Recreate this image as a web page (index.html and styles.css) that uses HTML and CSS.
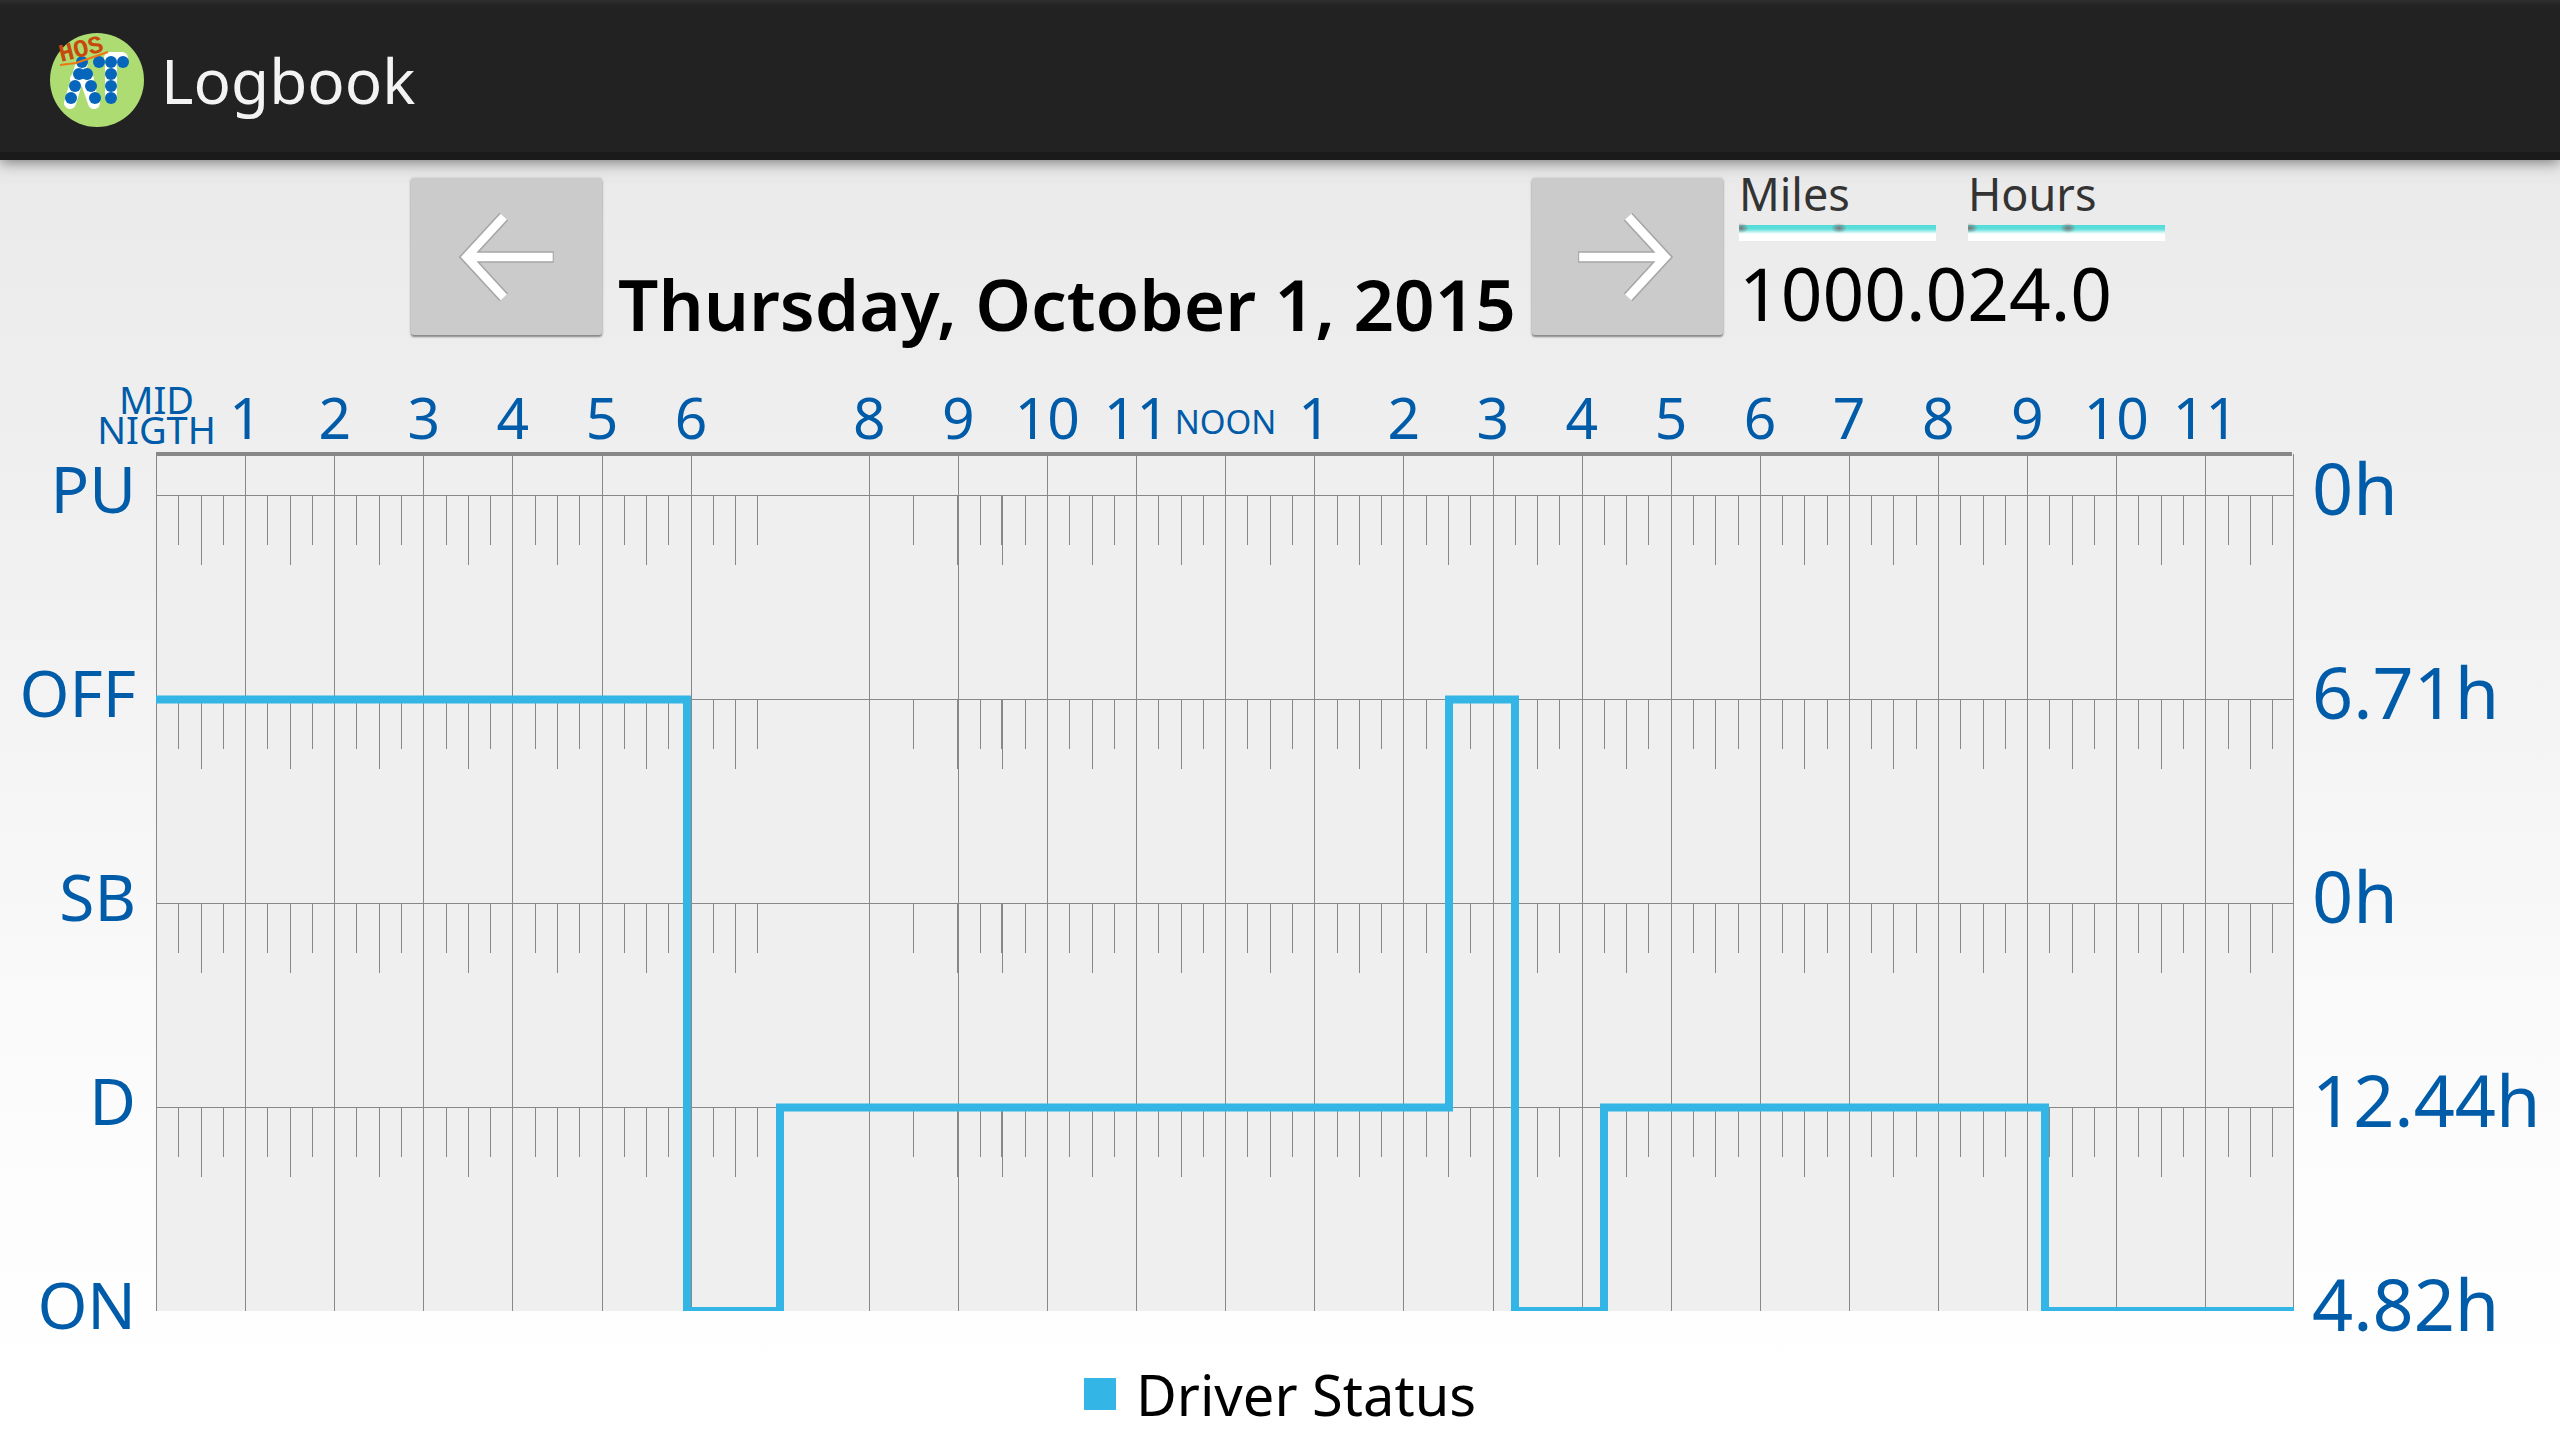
FILE: index.html
```
<!DOCTYPE html>
<html lang="en">
<head>
  <meta charset="UTF-8" />
  <meta name="viewport" content="width=device-width, initial-scale=1" />
  <title>Logbook</title>
  <link rel="stylesheet" href="styles.css">
</head>
<body>
  <header class="action-bar">
    <svg class="logo" viewBox="0 0 94 94" aria-hidden="true">
      <circle cx="47" cy="47" r="47" fill="#addc72" />
      <g fill="none" stroke="#fff" stroke-width="12" stroke-linecap="round">
        <path d="M32 30L20 70M34 41L44 70M60 25H72M61 27V64M26 46H38" />
      </g>
      <g fill="#0666bb">
        <circle cx="32" cy="29" r="6" /><circle cx="29" cy="41" r="6" /><circle cx="37" cy="41" r="6" />
        <circle cx="25" cy="53" r="6" /><circle cx="41" cy="53" r="6" />
        <circle cx="21" cy="65" r="6" /><circle cx="45" cy="65" r="6" />
        <circle cx="49" cy="29" r="6" /><circle cx="61" cy="29" r="6" /><circle cx="73" cy="29" r="6" />
        <circle cx="61" cy="41" r="6" /><circle cx="61" cy="53" r="6" /><circle cx="61" cy="65" r="6" />
      </g>
      <text class="logo-text" x="11" y="29" transform="rotate(-14 11 29)">HOS</text>
      <path d="M10 32L26 30L58 19" fill="none" stroke="#ee7711" stroke-width="2" />
    </svg>
    <h1>Logbook</h1>
  </header>

  <section class="toolbar">
    <button type="button" class="nav-btn" aria-label="Previous day">
      <svg viewBox="0 0 96 92" aria-hidden="true">
        <path class="arrow-edge" d="M92 46H8M45 8L10 46L45 84" />
        <path class="arrow" d="M91 46H10M45 8L10 46L45 84" />
      </svg>
    </button>
    <h2>Thursday, October 1, 2015</h2>
    <button type="button" class="nav-btn" aria-label="Next day">
      <svg viewBox="0 0 96 92" aria-hidden="true">
        <path class="arrow-edge" d="M2 46H86M49 8L84 46L49 84" />
        <path class="arrow" d="M3 46H84M49 8L84 46L49 84" />
      </svg>
    </button>
    <div class="totals">
      <div class="total-heads">
        <span>Miles</span>
        <span>Hours</span>
      </div>
      <div class="total-values"><span>1000.0</span><span>24.0</span></div>
    </div>
  </section>

  <main class="chart">
    <div class="hours" id="hours"></div>
    <div class="labels status">
      <span>PU</span><span>OFF</span><span>SB</span><span>D</span><span>ON</span>
    </div>
    <svg class="plot" id="plot" viewBox="0 0 2138 859" preserveAspectRatio="none"></svg>
    <div class="labels sums">
      <span>0h</span><span>6.71h</span><span>0h</span><span>12.44h</span><span>4.82h</span>
    </div>
  </main>

  <footer class="legend"><span class="swatch"></span>Driver Status</footer>

  <script>
    const HOUR = 89.1;
    const rows = { PU: 43.5, OFF: 247.5, SB: 451.5, D: 655.5, ON: 859 };

    // hour captions, 7 am has none
    const captions = ['MID<br>NIGTH', 1, 2, 3, 4, 5, 6, '', 8, 9, 10, 11, 'NOON', 1, 2, 3, 4, 5, 6, 7, 8, 9, 10, 11];
    document.getElementById('hours').innerHTML = captions.map((c, i) => {
      const cls = i === 0 ? ' class="midnight"' : i === 12 ? ' class="noon"' : '';
      return `<span${cls}>${c}</span>`;
    }).join('');

    let grid = '';
    for (let h = 0; h < 24; h++) {
      if (h === 7) continue;
      const x = Math.round(h * HOUR) + 0.5;
      grid += `M${x} 0V859`;
    }
    grid += 'M2137.5 2V859';

    for (const name of ['PU', 'OFF', 'SB', 'D']) {
      const y = rows[name];
      grid += `M0 ${y}H2138`;
      const tick = (h, len) => {
        grid += `M${Math.round(h * HOUR) + 0.5} ${y}v${len}`;
      };
      for (let h = 0; h < 24; h++) {
        if (h === 7) continue;
        if (h === 8) {
          tick(8.5, 49);
          tick(8.99, 69);
          continue;
        }
        tick(h + 0.25, 49);
        tick(h + 0.5, 69);
        tick(h + 0.75, 49);
        if (h === 9) tick(9.485, 49);
      }
    }

    // [x, row] for every change of status
    const log = [[0, 'OFF'], [531, 'ON'], [624, 'D'], [1293, 'OFF'], [1359, 'ON'], [1448, 'D'], [1889, 'ON']];
    let line = `M0 ${rows.OFF}`;
    log.slice(1).forEach(([x, row]) => { line += `H${x}V${rows[row]}`; });
    line += 'H2138';

    document.getElementById('plot').innerHTML =
      `<path class="grid" d="${grid}" />` +
      `<path class="top" d="M0 2H2136" />` +
      `<path class="line" d="${line}" />`;
  </script>
</body>
</html>
```
FILE: styles.css
```
* {
  box-sizing: border-box;
}
body {
  margin: 0;
  min-height: 100vh;
  font-family: "Noto Sans", "Open Sans", sans-serif;
  color: #000;
  background: linear-gradient(#e8e8e8 160px, #ebebeb 200px, #eee 400px, #f3f3f3 680px, #fafafa 1020px, #fefefe 1300px, #fff);
}
h1, h2 {
  margin: 0;
}
.action-bar {
  display: flex;
  align-items: center;
  gap: 17px;
  height: 160px;
  padding-left: 50px;
  background: linear-gradient(#2e2e2e, #222 6px);
  border-bottom: 8px solid #1a1a1a;
  box-shadow: 0 2px 14px rgba(0, 0, 0, 0.5);
}
.logo {
  width: 94px;
  height: 94px;
  margin-top: 8px;
  overflow: visible;
}
.logo-text {
  font: bold 25px "Liberation Mono", monospace;
  fill: #c8480c;
}
h1 {
  padding-top: 8px;
  font-size: 62px;
  font-weight: 400;
  color: #f3f3f3;
}
.toolbar {
  display: flex;
  justify-content: center;
  gap: 16px;
  height: 212px;
  padding: 18px 0 0 16px;
}
.nav-btn {
  display: flex;
  align-items: center;
  justify-content: center;
  width: 191px;
  height: 157px;
  padding: 0;
  background: #cbcbcb;
  border: 0;
  border-radius: 3px;
  box-shadow: 0 2px 2px #888, 0 0 3px #bbb;
}
.nav-btn svg {
  width: 102px;
  height: 98px;
}
.arrow, .arrow-edge {
  fill: none;
  stroke: #fff;
  stroke-width: 8;
}
.arrow-edge {
  stroke: #a6a6a6;
  stroke-width: 11;
}
h2 {
  padding-top: 74px;
  font-size: 71px;
  font-weight: 600;
  line-height: 104px;
  white-space: nowrap;
}
.total-heads {
  display: flex;
  gap: 32px;
}
.total-heads span {
  width: 197px;
  height: 63px;
  font-size: 45px;
  line-height: 32px;
  color: #333;
  background:
    radial-gradient(8px 5px at 2px 50px, #777, transparent),
    radial-gradient(8px 5px at 100px 50px, #777, transparent),
    linear-gradient(#4fdcd8, #5fdfdb 4px, #fff) 0 47px / 100% 9px no-repeat,
    linear-gradient(#fff, #fff) 0 47px / 100% 16px no-repeat;
}
.total-values {
  font-size: 73px;
  line-height: 104px;
}
.chart {
  display: grid;
  grid-template-columns: 156px 1fr 266px;
  grid-template-rows: 80px auto;
  color: #005ba8;
}
.hours {
  grid-column: 1 / -1;
  display: grid;
  grid-template-columns: repeat(24, minmax(0, 1fr));
  padding: 0 310px 0 112px;
  font-size: 57px;
  line-height: 90px;
}
.hours span {
  display: flex;
  justify-content: center;
  white-space: nowrap;
}
.hours .midnight {
  padding-top: 12px;
  font-size: 38px;
  line-height: 30px;
  text-align: center;
}
.hours .noon {
  font-size: 33px;
  line-height: 100px;
}
.labels {
  display: grid;
  grid-template-rows: 77px repeat(4, 204px);
  align-items: end;
  font-size: 64px;
  line-height: 80px;
}
.status {
  padding-right: 20px;
  text-align: right;
}
.sums {
  padding-left: 18px;
  font-size: 72px;
  line-height: 84px;
}
.plot {
  display: block;
  width: 100%;
  height: 859px;
  background: #efefef;
}
.grid {
  fill: none;
  stroke: #888;
  stroke-width: 1;
  shape-rendering: crispEdges;
}
.top {
  stroke: #888;
  stroke-width: 4;
}
.line {
  fill: none;
  stroke: #33b5e5;
  stroke-width: 8;
}
.legend {
  display: flex;
  align-items: center;
  justify-content: center;
  gap: 20px;
  height: 98px;
  font-size: 56px;
}
.swatch {
  width: 32px;
  height: 32px;
  background: #33b5e5;
}
```
